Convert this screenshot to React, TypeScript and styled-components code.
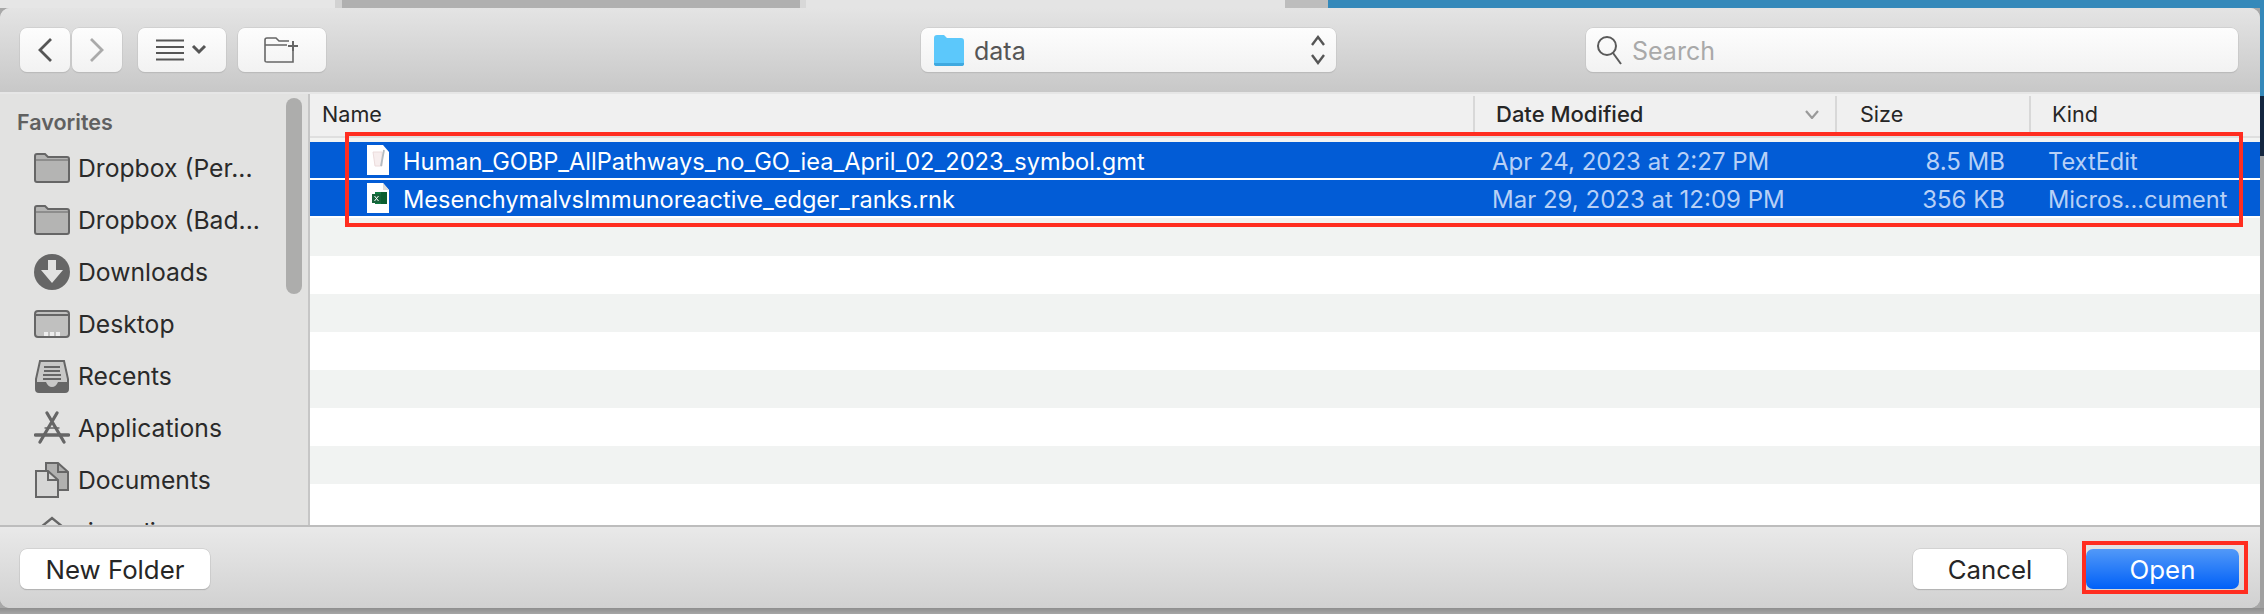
import React from "react";
import styled, { createGlobalStyle } from "styled-components";

const FONT = `Inter, "Liberation Sans", sans-serif`;
const COLUMNS = "1163px 362px 194px 1fr";

const GlobalStyle = createGlobalStyle`
  html, body {
    margin: 0;
    padding: 0;
    background: #a8a8a8;
  }
  * {
    box-sizing: border-box;
  }
`;

const Page = styled.div`
  display: flex;
  flex-direction: column;
  width: 2264px;
  height: 614px;
  overflow: hidden;
  font-family: ${FONT};
`;

const TopStrip = styled.div`
  display: flex;
  height: 8px;
  flex: none;
`;

const StripPart = styled.div<{ $width: number; $color: string }>`
  width: ${p => p.$width}px;
  flex: ${p => (p.$width ? "none" : "1")};
  background: ${p => p.$color};
`;

const Middle = styled.div`
  display: flex;
  height: 600px;
  flex: none;
`;

const RightEdge = styled.div`
  display: flex;
  flex-direction: column;
  width: 4px;
`;

const EdgePart = styled.div<{ $height: number; $color: string }>`
  height: ${p => p.$height}px;
  flex: ${p => (p.$height ? "none" : "1")};
  background: ${p => p.$color};
`;

const BottomStrip = styled.div`
  flex: 1;
  background: linear-gradient(#8e8e8e, #a6a6a6);
`;

const Dialog = styled.div`
  position: relative;
  display: flex;
  flex-direction: column;
  width: 2260px;
  height: 600px;
  border-radius: 10px;
  overflow: hidden;
  background: #e2e2e1;
`;

const Toolbar = styled.div`
  display: flex;
  align-items: flex-start;
  flex: none;
  height: 84px;
  padding: 20px 0 0 20px;
  background: linear-gradient(#e4e4e4, #c8c8c8);
`;

const ToolButton = styled.div<{ $width: number; $gap?: number }>`
  display: flex;
  align-items: center;
  justify-content: center;
  width: ${p => p.$width}px;
  height: 44px;
  margin-left: ${p => p.$gap || 0}px;
  border-radius: 7px;
  background: linear-gradient(#fdfdfd, #f2f2f2);
  box-shadow: 0 0 0 0.5px #c4c4c4, 0 1px 1px #b0b0b0;
`;

const PopupButton = styled(ToolButton)`
  justify-content: flex-start;
  padding: 0 10px 0 13px;
  color: #555555;
  font-size: 25px;
`;

const PopupLabel = styled.span`
  flex: 1;
  margin-left: 10px;
  padding-top: 2px;
`;

const SearchField = styled(ToolButton)`
  justify-content: flex-start;
  padding-left: 10px;
  color: #a9a9a9;
  font-size: 25px;
`;

const SearchLabel = styled.span`
  margin-left: 10px;
  padding-top: 2px;
`;

const Content = styled.div`
  display: flex;
  height: 433px;
  flex: none;
  border-top: 2px solid #e6e6e6;
`;

const Sidebar = styled.div`
  position: relative;
  width: 310px;
  flex: none;
  overflow: hidden;
  padding-top: 13px;
  background: #e2e2e1;
  border-right: 2px solid #c6c6c6;
`;

const SidebarHeading = styled.div`
  height: 27px;
  margin: 2px 0 6px 17px;
  color: #606060;
  font-size: 21.5px;
  font-weight: 600;
  line-height: 27px;
`;

const SidebarItem = styled.div`
  display: flex;
  align-items: center;
  height: 52px;
  padding-left: 34px;
  color: #2a2a2a;
  font-size: 24.7px;
  white-space: nowrap;
`;

const ItemLabel = styled.span`
  margin-left: 8px;
`;

const ScrollThumb = styled.div`
  position: absolute;
  top: 4px;
  left: 286px;
  width: 16px;
  height: 196px;
  border-radius: 8px;
  background: #adadac;
`;

const FileList = styled.div`
  flex: 1;
  overflow: hidden;
  background: #ffffff;
`;

const HeaderRow = styled.div`
  display: grid;
  grid-template-columns: ${COLUMNS};
  height: 44px;
  padding-top: 2px;
  background: #f0f0f0;
  border-bottom: 2px solid #dfdfdf;
`;

const HeaderCell = styled.div<{ $divider?: boolean }>`
  display: flex;
  align-items: center;
  justify-content: space-between;
  padding: 0 16px 4px 13px;
  color: #262626;
  font-size: 21.6px;
  border-left: ${p => (p.$divider ? "2px solid #d8d8d8" : "0")};
`;

const NameHeader = styled(HeaderCell)`
  padding-left: 12px;
`;

const DateHeader = styled(HeaderCell)`
  padding-left: 21px;
  font-size: 22px;
  font-weight: 500;
`;

const SizeHeader = styled(HeaderCell)`
  padding-left: 23px;
`;

const KindHeader = styled(HeaderCell)`
  padding-left: 21px;
`;

const Rows = styled.div`
  padding-top: 4px;
  background: #f2f3f2;
`;

const Row = styled.div<{ $selected?: boolean; $striped?: boolean }>`
  display: grid;
  grid-template-columns: ${COLUMNS};
  align-items: center;
  height: 38px;
  background: ${p => (p.$selected ? "#025cd6" : p.$striped ? "#f1f3f2" : "#ffffff")};
  border-bottom: ${p => (p.$selected ? "2px solid #ffffff" : "0")};
`;

const NameCell = styled.div`
  display: flex;
  align-items: center;
  padding-left: 57px;
  color: #ffffff;
  font-size: 23.6px;
  white-space: nowrap;
`;

const FileName = styled.span`
  margin-left: 14px;
  padding-top: 2px;
`;

const MetaCell = styled.div`
  padding-top: 2px;
  color: #b7d0f6;
  font-size: 24px;
  white-space: nowrap;
`;

const DateCell = styled(MetaCell)`
  padding-left: 19px;
`;

const SizeCell = styled(MetaCell)`
  padding-right: 24px;
  text-align: right;
`;

const KindCell = styled(MetaCell)`
  padding-left: 19px;
  font-size: 23.6px;
`;

const Footer = styled.div`
  display: flex;
  align-items: flex-start;
  justify-content: space-between;
  flex: 1;
  padding: 22px 21px 0 20px;
  border-top: 2px solid #bdbdbd;
  background: linear-gradient(#e9e9e9, #d1d1d1);
`;

const FooterActions = styled.div`
  display: flex;
  gap: 19px;
`;

const PushButton = styled.div<{ $width: number; $primary?: boolean }>`
  display: flex;
  align-items: center;
  justify-content: center;
  width: ${p => p.$width}px;
  height: 40px;
  border-radius: 7px;
  color: ${p => (p.$primary ? "#ffffff" : "#262626")};
  font-size: 25.8px;
  background: ${p => (p.$primary ? "linear-gradient(#5299f8, #0060f8)" : "#ffffff")};
  box-shadow: ${p => (p.$primary ? "none" : "0 0 0 0.5px #c4c4c4, 0 1px 1px #a0a0a0")};
`;

const Highlight = styled.div<{ $left: number; $top: number; $width: number; $height: number }>`
  position: absolute;
  left: ${p => p.$left}px;
  top: ${p => p.$top}px;
  width: ${p => p.$width}px;
  height: ${p => p.$height}px;
  border: 4px solid #ff2d20;
  pointer-events: none;
`;

const ChevronLeft = ({ color }: { color: string }) => (
  <svg width="16" height="26" viewBox="0 0 16 26" fill="none">
    <path d="M14 2 L3 13 L14 24" stroke={color} strokeWidth="2.8" />
  </svg>
);

const ChevronRight = ({ color }: { color: string }) => (
  <svg width="16" height="26" viewBox="0 0 16 26" fill="none">
    <path d="M2 2 L13 13 L2 24" stroke={color} strokeWidth="2.8" />
  </svg>
);

const ListViewIcon = () => (
  <svg width="52" height="22" viewBox="0 0 52 22" fill="none" stroke="#555">
    <path d="M0 1.5 H28 M0 8 H28 M0 14 H28 M0 20.5 H28" strokeWidth="2" />
    <path d="M37 7 L43 13 L49 7" strokeWidth="3" />
  </svg>
);

const NewFolderIcon = () => (
  <svg width="36" height="26" viewBox="0 0 36 26" fill="none" stroke="#666" strokeWidth="1.6">
    <path d="M1 24 V3 Q1 1 3 1 H12 L15 4 H25 M1 8 H23 M1 24 Q1 25 3 25 H29 V14" />
    <path d="M29 4 V14 M24 9 H34" strokeWidth="2" />
  </svg>
);

const BlueFolderIcon = () => (
  <svg width="30" height="32" viewBox="0 0 30 32">
    <path d="M0 4 Q0 1 3 1 H10 L13 4 H27 Q30 4 30 7 V29 Q30 32 27 32 H3 Q0 32 0 29 Z" fill="#5cc8fb" />
    <path d="M0 29 H30 V30 Q30 32 27 32 H3 Q0 32 0 30 Z" fill="#3fa9e0" />
  </svg>
);

const UpDownIcon = () => (
  <svg width="16" height="32" viewBox="0 0 16 32" fill="none" stroke="#555" strokeWidth="2.4">
    <path d="M2 11 L8 3 L14 11 M2 21 L8 29 L14 21" />
  </svg>
);

const SearchIcon = () => (
  <svg width="26" height="30" viewBox="0 0 26 30" fill="none" stroke="#5a5a5a" strokeWidth="2">
    <circle cx="11" cy="11" r="9" />
    <path d="M17 18 L25 29" />
  </svg>
);

const SortIcon = () => (
  <svg width="14" height="9" viewBox="0 0 14 9" fill="none" stroke="#9a9a9a" strokeWidth="2.2">
    <path d="M1 1 L7 8 L13 1" />
  </svg>
);

const FolderIcon = () => (
  <svg width="36" height="30" viewBox="0 0 36 30">
    <path d="M1 27 V3 Q1 1 3 1 H11 L14 4 H33 Q35 4 35 6 V27 Q35 29 33 29 H3 Q1 29 1 27 Z" fill="#b4b4b3" stroke="#666" strokeWidth="2" />
    <path d="M1 7 H35" stroke="#666" strokeWidth="1" />
  </svg>
);

const DownloadsIcon = () => (
  <svg width="36" height="36" viewBox="0 0 36 36">
    <circle cx="18" cy="18" r="18" fill="#666" />
    <path d="M14 6 H22 V16 H29 L18 29 L7 16 H14 Z" fill="#e2e2e1" />
  </svg>
);

const DesktopIcon = () => (
  <svg width="36" height="28" viewBox="0 0 36 28">
    <rect x="1" y="1" width="34" height="26" rx="3" fill="#c0c0bf" stroke="#666" strokeWidth="2" />
    <path d="M1 5 H35" stroke="#666" strokeWidth="2" />
    <path d="M10 22 h4 v4 h-4 z M16 22 h4 v4 h-4 z M22 22 h4 v4 h-4 z" fill="#eeeeee" />
  </svg>
);

const RecentsIcon = () => (
  <svg width="36" height="34" viewBox="0 0 36 34">
    <path d="M6 2 H30 L34 20 V30 Q34 33 31 33 H5 Q2 33 2 30 V20 Z" fill="#c8c8c7" stroke="#666" strokeWidth="2" />
    <path d="M10 8 H26 M10 12 H26 M9 16 H27 M9 20 H27" stroke="#666" strokeWidth="2" />
    <path d="M2 23 H12 Q14 28 18 28 Q22 28 24 23 H34 V30 Q34 33 31 33 H5 Q2 33 2 30 Z" fill="#666" />
  </svg>
);

const ApplicationsIcon = () => (
  <svg width="36" height="34" viewBox="0 0 36 34" fill="none" stroke="#666" strokeLinecap="round">
    <path d="M13 2 L30 31 M23 2 L6 31" strokeWidth="3.2" />
    <path d="M1.5 24 H34.5" strokeWidth="3.4" />
    <path d="M11 17 H25" strokeWidth="1.4" />
  </svg>
);

const DocumentsIcon = () => (
  <svg width="36" height="36" viewBox="0 0 36 36">
    <path d="M12 1 H24 L34 10 V28 H12 Z" fill="#b0b0af" stroke="#666" strokeWidth="2" />
    <path d="M2 9 H14 L24 18 V35 H2 Z" fill="#d6d6d5" stroke="#666" strokeWidth="2" />
    <path d="M14 9 V18 H24 M24 1 V10 H34" fill="none" stroke="#666" strokeWidth="2" />
  </svg>
);

const HomeIcon = () => (
  <svg width="36" height="32" viewBox="0 0 36 32" fill="none" stroke="#666" strokeWidth="2.4">
    <path d="M1 16 L18 2 L35 16 M6 13 V31 H30 V13" />
  </svg>
);

const TextFileIcon = () => (
  <svg width="22" height="30" viewBox="0 0 22 30">
    <path d="M0 0 H16 L22 7 V30 H0 Z" fill="#ffffff" />
    <path d="M6 7 H15 L15 21 H8 Z" fill="#f7eeee" stroke="#ecdcdc" strokeWidth="1" />
    <path d="M17 5 L14 21" stroke="#b4bbc0" strokeWidth="1.8" />
  </svg>
);

const SheetFileIcon = () => (
  <svg width="22" height="30" viewBox="0 0 22 30">
    <path d="M0 0 H16 L22 7 V30 H0 Z" fill="#ffffff" />
    <path d="M16 0 V7 H22 Z" fill="#dcdcdc" />
    <rect x="8" y="9" width="12" height="12" fill="#107c41" />
    <rect x="14" y="9" width="6" height="12" fill="#0b5e30" />
    <rect x="5" y="11" width="9" height="9" fill="#17633a" />
    <path d="M7.5 13 L11.5 18 M11.5 13 L7.5 18" stroke="#ffffff" strokeWidth="1" />
  </svg>
);

const FAVORITES = [
  { label: "Dropbox (Per...", icon: <FolderIcon /> },
  { label: "Dropbox (Bad...", icon: <FolderIcon /> },
  { label: "Downloads", icon: <DownloadsIcon /> },
  { label: "Desktop", icon: <DesktopIcon /> },
  { label: "Recents", icon: <RecentsIcon /> },
  { label: "Applications", icon: <ApplicationsIcon /> },
  { label: "Documents", icon: <DocumentsIcon /> },
  { label: "risserlin", icon: <HomeIcon /> },
];

const FILES = [
  {
    name: "Human_GOBP_AllPathways_no_GO_iea_April_02_2023_symbol.gmt",
    date: "Apr 24, 2023 at 2:27 PM",
    size: "8.5 MB",
    kind: "TextEdit",
    icon: <TextFileIcon />,
  },
  {
    name: "MesenchymalvsImmunoreactive_edger_ranks.rnk",
    date: "Mar 29, 2023 at 12:09 PM",
    size: "356 KB",
    kind: "Micros...cument",
    icon: <SheetFileIcon />,
  },
];

const EMPTY_ROWS = [true, false, true, false, true, false, true, false];

export default function App() {
  return (
    <Page>
      <GlobalStyle />
      <TopStrip>
        <StripPart $width={335} $color="#e6e6e6" />
        <StripPart $width={7} $color="#d2d2d2" />
        <StripPart $width={458} $color="#b0b0b0" />
        <StripPart $width={6} $color="#d8d8d8" />
        <StripPart $width={479} $color="#e4e4e4" />
        <StripPart $width={43} $color="#bdbdbd" />
        <StripPart $width={0} $color="#3589ba" />
      </TopStrip>
      <Middle>
        <Dialog>
          <Toolbar>
            <ToolButton $width={50}>
              <ChevronLeft color="#555" />
            </ToolButton>
            <ToolButton $width={50} $gap={2}>
              <ChevronRight color="#aaa" />
            </ToolButton>
            <ToolButton $width={88} $gap={16}>
              <ListViewIcon />
            </ToolButton>
            <ToolButton $width={88} $gap={12}>
              <NewFolderIcon />
            </ToolButton>
            <PopupButton $width={415} $gap={595}>
              <BlueFolderIcon />
              <PopupLabel>data</PopupLabel>
              <UpDownIcon />
            </PopupButton>
            <SearchField $width={652} $gap={250}>
              <SearchIcon />
              <SearchLabel>Search</SearchLabel>
            </SearchField>
          </Toolbar>
          <Content>
            <Sidebar>
              <SidebarHeading>Favorites</SidebarHeading>
              {FAVORITES.map(item => (
                <SidebarItem key={item.label}>
                  {item.icon}
                  <ItemLabel>{item.label}</ItemLabel>
                </SidebarItem>
              ))}
              <ScrollThumb />
            </Sidebar>
            <FileList>
              <HeaderRow>
                <NameHeader>Name</NameHeader>
                <DateHeader $divider>
                  Date Modified
                  <SortIcon />
                </DateHeader>
                <SizeHeader $divider>Size</SizeHeader>
                <KindHeader $divider>Kind</KindHeader>
              </HeaderRow>
              <Rows>
                {FILES.map(file => (
                  <Row key={file.name} $selected>
                    <NameCell>
                      {file.icon}
                      <FileName>{file.name}</FileName>
                    </NameCell>
                    <DateCell>{file.date}</DateCell>
                    <SizeCell>{file.size}</SizeCell>
                    <KindCell>{file.kind}</KindCell>
                  </Row>
                ))}
                {EMPTY_ROWS.map((striped, i) => (
                  <Row key={i} $striped={striped} />
                ))}
              </Rows>
            </FileList>
          </Content>
          <Footer>
            <PushButton $width={190}>New Folder</PushButton>
            <FooterActions>
              <PushButton $width={154}>Cancel</PushButton>
              <PushButton $width={153} $primary>
                Open
              </PushButton>
            </FooterActions>
          </Footer>
          <Highlight $left={345} $top={124} $width={1898} $height={95} />
          <Highlight $left={2082} $top={533} $width={166} $height={53} />
        </Dialog>
        <RightEdge>
          <EdgePart $height={88} $color="#3589ba" />
          <EdgePart $height={60} $color="#14263f" />
          <EdgePart $height={0} $color="#a0a0a0" />
        </RightEdge>
      </Middle>
      <BottomStrip />
    </Page>
  );
}
